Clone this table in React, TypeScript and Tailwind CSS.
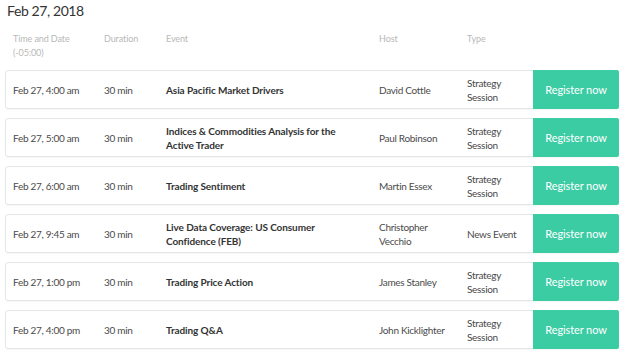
import React from 'react';

const sessions = [
  { time: 'Feb 27, 4:00 am', event: 'Asia Pacific Market Drivers', host: 'David Cottle', type: 'Strategy Session' },
  { time: 'Feb 27, 5:00 am', event: 'Indices & Commodities Analysis for the Active Trader', host: 'Paul Robinson', type: 'Strategy Session' },
  { time: 'Feb 27, 6:00 am', event: 'Trading Sentiment', host: 'Martin Essex', type: 'Strategy Session' },
  { time: 'Feb 27, 9:45 am', event: 'Live Data Coverage: US Consumer Confidence (FEB)', host: 'Christopher Vecchio', type: 'News Event' },
  { time: 'Feb 27, 1:00 pm', event: 'Trading Price Action', host: 'James Stanley', type: 'Strategy Session' },
  { time: 'Feb 27, 4:00 pm', event: 'Trading Q&A', host: 'John Kicklighter', type: 'Strategy Session' },
];

export default function App() {
  return (
    <div className="w-[624px] h-[354px] bg-white overflow-hidden font-['Lato',sans-serif] text-[#4a4a4a]">
      <h1 className="pl-[7px] pt-[1px] text-[14px] tracking-[-0.4px] leading-[20px] text-[#333]">Feb 27, 2018</h1>

      {/* column headings */}
      <div className="flex pl-[13px] mt-[11px] h-[38px] text-[9px] tracking-[-0.1px] leading-[14px] text-[#b8b8b8]">
        <div className="w-[91px]">Time and Date<br />(-05:00)</div>
        <div className="w-[62px]">Duration</div>
        <div className="w-[213px]">Event</div>
        <div className="w-[88px]">Host</div>
        <div>Type</div>
      </div>

      <div className="flex flex-col gap-[9px] px-[5px]">
        {sessions.map((s) => (
          <div key={s.time} className="flex items-stretch h-[39px] border border-[#e6e6e6] rounded-[3px] shadow-[0_1px_1px_rgba(0,0,0,0.04)] text-[10px] tracking-[-0.3px] leading-[14px]">
            <div className="flex items-center w-[98px] pl-[7px]">{s.time}</div>
            <div className="flex items-center w-[62px]">30 min</div>
            <div className="flex items-center w-[213px] pr-[34px] font-bold tracking-[-0.1px] text-[#333]">{s.event}</div>
            <div className="flex items-center w-[88px] pr-[12px]">{s.host}</div>
            <div className="flex items-center flex-1 pr-[10px]">{s.type}</div>
            <button className="w-[86px] -my-px -mr-px bg-[#3ccca4] text-white text-[11px] tracking-[-0.1px] rounded-r-[2px]">
              Register now
            </button>
          </div>
        ))}
      </div>
    </div>
  );
}
